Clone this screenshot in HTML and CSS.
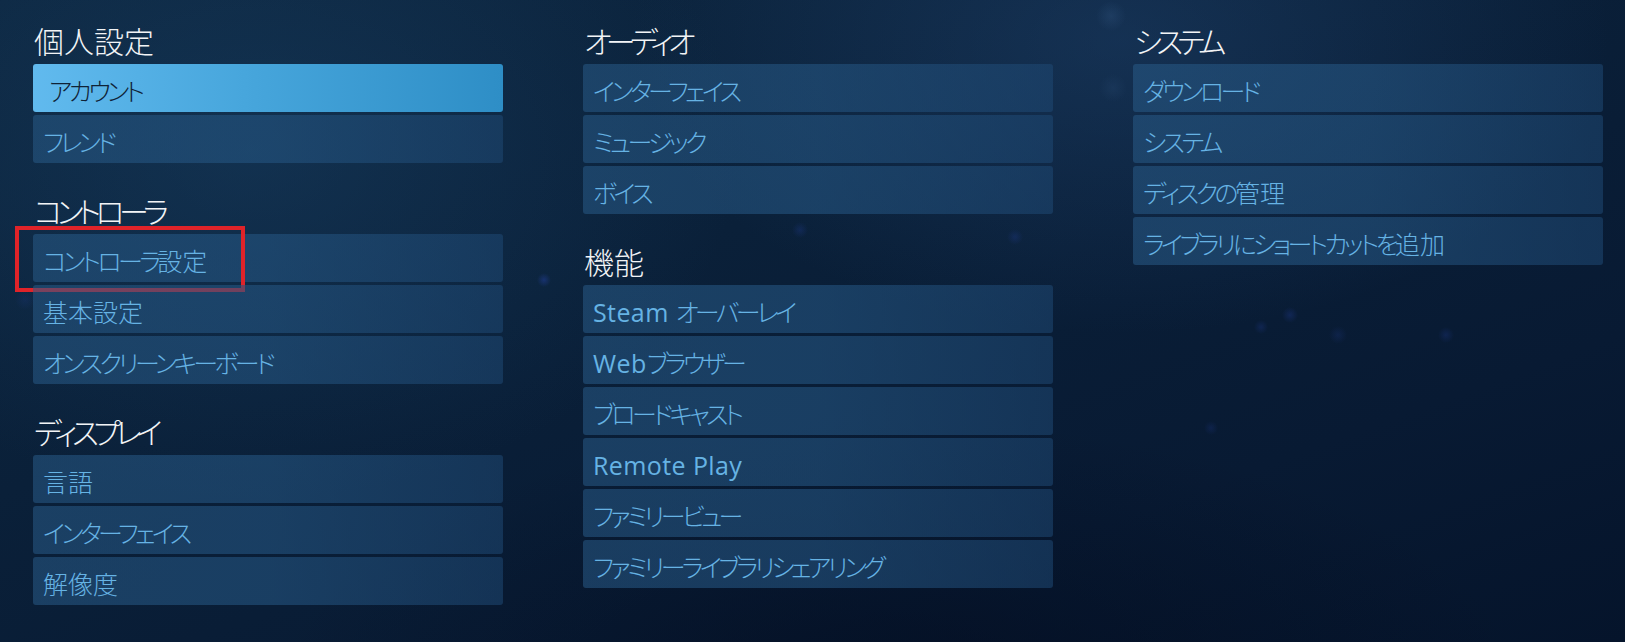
FILE: index.html
```html
<!DOCTYPE html>
<html lang="ja">
<head>
<meta charset="utf-8">
<title>設定</title>
<link rel="stylesheet" href="styles.css">
</head>
<body>
<div class="bokeh"></div>
<main class="settings">
  <div class="column">
    <section class="group">
      <h2 class="group-title"><span class="kanji">個人設定</span></h2>
      <ul class="items">
        <li class="item active">アカウント</li>
        <li class="item">フレンド</li>
      </ul>
    </section>
    <section class="group">
      <h2 class="group-title">コントローラ</h2>
      <ul class="items">
        <li class="item marked">コントローラ<span class="kanji">設定</span><span class="highlight"></span></li>
        <li class="item"><span class="kanji">基本設定</span></li>
        <li class="item">オンスクリーンキーボード</li>
      </ul>
    </section>
    <section class="group">
      <h2 class="group-title">ディスプレイ</h2>
      <ul class="items">
        <li class="item"><span class="kanji">言語</span></li>
        <li class="item">インターフェイス</li>
        <li class="item"><span class="kanji">解像度</span></li>
      </ul>
    </section>
  </div>
  <div class="column">
    <section class="group">
      <h2 class="group-title">オーディオ</h2>
      <ul class="items">
        <li class="item">インターフェイス</li>
        <li class="item">ミュージック</li>
        <li class="item">ボイス</li>
      </ul>
    </section>
    <section class="group">
      <h2 class="group-title"><span class="kanji">機能</span></h2>
      <ul class="items">
        <li class="item"><span class="latin">Steam </span>オーバーレイ</li>
        <li class="item"><span class="latin">Web</span>ブラウザー</li>
        <li class="item">ブロードキャスト</li>
        <li class="item"><span class="latin">Remote Play</span></li>
        <li class="item">ファミリービュー</li>
        <li class="item">ファミリーライブラリシェアリング</li>
      </ul>
    </section>
  </div>
  <div class="column">
    <section class="group">
      <h2 class="group-title">システム</h2>
      <ul class="items">
        <li class="item">ダウンロード</li>
        <li class="item">システム</li>
        <li class="item">ディスクの<span class="kanji">管理</span></li>
        <li class="item">ライブラリにショートカットを<span class="kanji">追加</span></li>
      </ul>
    </section>
  </div>
</main>
</body>
</html>
```

FILE: styles.css
```css
* { box-sizing: border-box; }

html, body {
  margin: 0;
  padding: 0;
  height: 100%;
}

body {
  position: relative;
  overflow: hidden;
  font-family: "Noto Sans CJK JP", "Open Sans", sans-serif;
  font-feature-settings: "palt" 1;
  color: #ffffff;
  background:
    radial-gradient(ellipse 700px 420px at 1120px 40px, rgba(40, 80, 130, 0.35), transparent 70%),
    radial-gradient(ellipse 700px 500px at 250px 150px, rgba(30, 75, 115, 0.35), transparent 70%),
    radial-gradient(ellipse 900px 400px at 900px 700px, rgba(2, 10, 28, 0.6), transparent 70%),
    linear-gradient(160deg, #0d2741 0%, #0a2039 40%, #081a33 75%, #05142b 100%);
}

.bokeh {
  position: absolute;
  inset: 0;
  pointer-events: none;
  background:
    radial-gradient(circle 15px at 1111px 16px, rgba(70, 110, 160, 0.2), transparent 100%),
    radial-gradient(circle 14px at 1113px 88px, rgba(70, 110, 160, 0.12), transparent 100%),
    radial-gradient(circle 7px at 544px 280px, rgba(40, 70, 180, 0.4), transparent 100%),
    radial-gradient(circle 8px at 800px 230px, rgba(40, 70, 180, 0.22), transparent 100%),
    radial-gradient(circle 8px at 1015px 237px, rgba(40, 70, 180, 0.22), transparent 100%),
    radial-gradient(circle 8px at 1290px 315px, rgba(40, 70, 180, 0.25), transparent 100%),
    radial-gradient(circle 7px at 1261px 327px, rgba(40, 70, 180, 0.22), transparent 100%),
    radial-gradient(circle 9px at 1338px 335px, rgba(40, 70, 170, 0.18), transparent 100%),
    radial-gradient(circle 8px at 1446px 335px, rgba(40, 70, 180, 0.22), transparent 100%),
    radial-gradient(circle 7px at 1211px 428px, rgba(40, 70, 180, 0.18), transparent 100%),
    radial-gradient(circle 10px at 25px 300px, rgba(40, 70, 180, 0.14), transparent 100%);
}

.settings {
  position: relative;
  display: grid;
  grid-template-columns: 470px 470px 470px;
  column-gap: 80px;
  padding: 20px 0 0 33px;
}

.column {
  display: flex;
  flex-direction: column;
  gap: 27px;
}

.group-title {
  margin: 0 0 4px 0;
  height: 40px;
  font-size: 30px;
  line-height: 40px;
  font-weight: 300;
  letter-spacing: -5.6px;
  color: #f2f4f6;
  padding-left: 1px;
  white-space: nowrap;
}

.items {
  list-style: none;
  margin: 0;
  padding: 0;
  display: flex;
  flex-direction: column;
  gap: 3px;
}

.item {
  position: relative;
  height: 48px;
  padding: 4px 0 0 10px;
  line-height: 44px;
  font-size: 25px;
  font-weight: 300;
  letter-spacing: -3.6px;
  color: #66b3e4;
  border-radius: 3px;
  white-space: nowrap;
  background: linear-gradient(90deg, rgba(40, 90, 135, 0.55) 0%, rgba(36, 84, 128, 0.6) 50%, rgba(30, 72, 115, 0.55) 100%);
}

.kanji {
  letter-spacing: 0;
}

.latin {
  font-family: "Open Sans", sans-serif;
  font-weight: 400;
  letter-spacing: 0.4px;
}

.item.active {
  padding-left: 16px;
  color: #0f2236;
  background: linear-gradient(90deg, #61baee 0%, #47a6dc 45%, #2e8ec6 100%);
}

.highlight {
  position: absolute;
  left: -18px;
  top: -8px;
  width: 230px;
  height: 66px;
  border: 4px solid #e02329;
  pointer-events: none;
}
```
